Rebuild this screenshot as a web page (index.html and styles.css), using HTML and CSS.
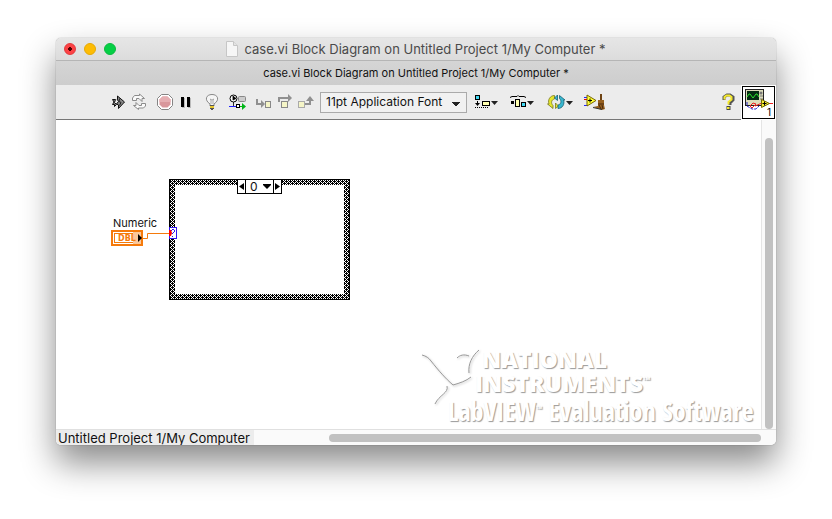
FILE: index.html
```html
<!DOCTYPE html>
<html lang="en">
<head>
<meta charset="utf-8">
<title>case.vi Block Diagram</title>
<link rel="stylesheet" href="styles.css">
</head>
<body>
<main class="window">
  <header class="titlebar">
    <div class="lights">
      <button class="light close" aria-label="Close"></button>
      <button class="light minimize" aria-label="Minimize"></button>
      <button class="light zoom" aria-label="Zoom"></button>
    </div>
    <svg class="doc" viewBox="0 0 12 16" width="12" height="16"><path d="M.5.5h7l4 4v11H.5z" fill="#f6f6f6" stroke="#c6c6c6"/><path d="M7.500.5v4h4" fill="#e4e4e4" stroke="#c6c6c6"/></svg>
    <h1 class="title">case.vi Block Diagram on Untitled Project 1/My Computer *</h1>
  </header>
  <div class="tab">case.vi Block Diagram on Untitled Project 1/My Computer *</div>

  <div class="toolbar">
    <div class="group">
      <button class="tool" aria-label="Run"><svg viewBox="0 0 20 20"><path d="M4.500 7.500h3l-1 3 2 2-2 2v-2h-2l1.500-2.500zM9.500 7V4l7 6-6 6.500V13l-2-1 2-2.500-1.500-2.500z" fill="#888" stroke="#111"/><path d="M11.500 6.500l-.5 3 2 1-1.500 3" fill="none" stroke="#222"/></svg></button>
      <button class="tool" aria-label="Run continuously"><svg viewBox="0 0 20 20"><path d="M3.500 8.500V6l2-2.500h5V2l5 4.500h-2.500v3l-3-3H7.500v2zM16.500 11.500V14l-2 2h-5v1.500l-5-4H7v-3l3 3h2.500v-2z" fill="#fafafa" stroke="#8b8b8b"/></svg></button>
    </div>
    <div class="group">
      <button class="tool" aria-label="Abort"><svg viewBox="0 0 20 20"><path d="M6.500 2.500h7l4 4v7l-4 4h-7l-4-4v-7z" fill="#fff" stroke="#858585"/><path d="M7.500 4.500h5l3 3v5l-3 3h-5l-3-3v-5z" fill="#d9979c"/><path d="M7.500 4.500h5l3 3V10h-11V7.500z" fill="#e5aeb2"/></svg></button>
      <button class="tool" aria-label="Pause"><svg viewBox="0 0 20 20"><path d="M6 6h3v10H6zM12 6h3v10h-3z" fill="#bbb"/><path d="M5 5h3v10H5zM11 5h3v10h-3z"/></svg></button>
    </div>
    <div class="group">
      <button class="tool" aria-label="Highlight execution"><svg viewBox="0 0 20 20"><path d="M8 12C2 8 4 2.500 10 2.500S18 8 12 12v2H8z" fill="#f5f5f5" stroke="#888"/><path d="M8 7l1 1v4M12 7l-1 1v4M8 7l2 1 2-1" fill="none" stroke="#aaa"/><path d="M8 13h4v3H8z" fill="#e6c62e"/><path d="M8 13.500h4M8 16.500h4M9 17.500h2" stroke="#555"/></svg></button>
    </div>
    <div class="group">
      <button class="tool" aria-label="Retain wire values"><svg viewBox="0 0 20 20"><circle cx="5.500" cy="6.500" r="3.500" fill="#fff" stroke="#000"/><path d="M5.500 10v4M5 4l3 2.500L5 8z" stroke="#000" stroke-width=".8"/><rect x="10.500" y="4.500" width="7" height="5" rx="1" fill="#ccc" stroke="#888"/><path d="M1 14.500h8" stroke="#22f"/><path d="M12 14.500h3" stroke="#0b0"/><path d="M14 11l4 3.500-4 3.500z" fill="#00b51a"/><rect x="8.500" y="12.500" width="3" height="3" fill="#fff" stroke="#000"/></svg></button>
    </div>
    <div class="group">
      <button class="tool" aria-label="Step into"><svg viewBox="0 0 20 20"><path d="M3 7v5h5" fill="none" stroke="#909090" stroke-width="2"/><path d="M7 8l4 4-4 4z" fill="#909090"/><rect x="11.500" y="9.500" width="5" height="6" fill="#f5f5c7" stroke="#888"/></svg></button>
      <button class="tool" aria-label="Step over"><svg viewBox="0 0 20 20"><path d="M4 10V6h9" fill="none" stroke="#909090" stroke-width="2"/><path d="M13 2l4 4-4 4z" fill="#909090"/><rect x="6.500" y="9.500" width="6" height="6" fill="#f5f5c7" stroke="#888"/></svg></button>
      <button class="tool" aria-label="Step out"><svg viewBox="0 0 20 20"><rect x="2.500" y="9.500" width="6" height="6" fill="#f5f5c7" stroke="#aaa"/><path d="M9 12h5V8" fill="none" stroke="#909090" stroke-width="2"/><path d="M10 9l4-5 4 5z" fill="#909090"/></svg></button>
    </div>
    <select class="font" aria-label="Font"><option>11pt Application Font</option></select>
    <div class="menus">
      <button class="menu" aria-label="Align objects"><svg viewBox="0 0 28 20"><rect x="1.500" y="3.500" width="4" height="4" fill="#42d9f4" stroke="#000"/><path d="M3.500 9v3" stroke="#000"/><path d="M1 11h5l-2.500 3z"/><path d="M1 15.500h14" stroke="#000" stroke-dasharray="1 1"/><rect x="8.500" y="9.500" width="7" height="4" fill="#ffffb0" stroke="#000"/><path d="M17 9h7l-3.500 4z" fill="#222"/></svg></button>
      <button class="menu" aria-label="Distribute objects"><svg viewBox="0 0 28 20"><path d="M0 5.500l2-1h5l1-1 1 1h5l2 1" fill="none" stroke="#000"/><rect x="1" y="9" width="3" height="3"/><rect x="5.500" y="7.500" width="4" height="7" fill="#ffffb0" stroke="#000"/><rect x="11.500" y="10.500" width="4" height="4" fill="#42d9f4" stroke="#000"/><path d="M17 9h7l-3.500 4z" fill="#222"/></svg></button>
      <button class="menu" aria-label="Reorder"><svg viewBox="0 0 28 20"><path d="M8.500 3.500C4 3.500 1.500 8 3 12H1.500L7 16.500v-3C4.500 11 5.500 7.500 8.500 7z" fill="#e6e62c" stroke="#77771a" stroke-width=".8"/><path d="M9.500 11v5.500l3-2.500z" fill="#e6e62c" stroke="#77771a" stroke-width=".8"/><path d="M12 16.500c4.500 0 7-4.500 5.500-8.500H19l-5.500-4.500v3c2.500 2.500 1.500 6-1.500 6.500z" fill="#38b6cf" stroke="#176273" stroke-width=".8"/><path d="M11.500 3v5.500L8.500 6z" fill="#38b6cf" stroke="#176273" stroke-width=".8"/><path d="M20 9h7l-3.500 4z" fill="#222"/></svg></button>
      <button class="menu" aria-label="Clean up diagram"><svg viewBox="0 0 28 20"><path d="M2 5.500h4M2 13.500h4" stroke="#22f"/><path d="M2 7.500h3" stroke="#e00"/><path d="M5 3l9 5.500L5 14z" fill="#ffff35" stroke="#776500"/><path d="M6 8.500h4M8 6.500v4" stroke="#000"/><path d="M18 2h2v6h2v5l1 4-3 1-9-3 5-1v-6h2z" fill="#96601f"/><path d="M19 2v6M16 12h6M17 13l2 4M20 13l1 4" fill="none" stroke="#47270a"/><path d="M11 15.500l9 2" stroke="#333"/></svg></button>
    </div>
    <div class="right">
      <button class="tool" aria-label="Help"><svg viewBox="0 0 20 20"><path d="M6 8V5l3-2h3l3 2v3l-3 3v2" fill="none" stroke="#555" stroke-width="3"/><path d="M8.500 14h4v4h-4z" fill="#444"/><path d="M6.500 7.500V5l2-1.500h3l2 1.500v2.500L10.500 10v2.500" fill="none" stroke="#f5e92c" stroke-width="2"/><path d="M9 15h2.500v2H9z" fill="#f5e92c"/></svg></button>
      <button class="vi" aria-label="VI icon"><svg viewBox="0 0 30 30"><rect x="2.500" y="2.500" width="18" height="16" fill="#ddddbc" stroke="#222"/><rect x="4" y="4" width="12" height="9" fill="#052c13"/><path d="M4 10l2-3h1l3 4 3-4h1l2 3" fill="none" stroke="#2de32d"/><circle cx="18" cy="6" r="1.500" fill="#777"/><path d="M17 9h3M17 12h3" stroke="#777"/><path d="M4 15v4l5 3h4l3-3" fill="none" stroke="#22c" stroke-dasharray="3 1"/><path d="M7 19l3-3 3 1-4 4zM12 19l7-3M25 16.500h5" fill="none" stroke="#e22"/><path d="M18.500 12.500l8 4-8 4z" fill="#f8ed32" stroke="#776b00"/><path d="M19.500 16.500h4M21.500 14.500v4" stroke="#000"/></svg><span class="vi-number">1</span></button>
    </div>
  </div>

  <section class="workspace">
    <div class="canvas">
      <div class="terminal">
        <span class="terminal-label">Numeric</span>
        <svg class="terminal-icon" viewBox="0 0 32 16" width="32" height="16"><rect x="1" y="1" width="30" height="14" fill="#fff" stroke="#f57a0b" stroke-width="2"/><rect x="3.500" y="3.500" width="24" height="9" fill="#fff" stroke="#f57a0b"/><rect x="22" y="2" width="8" height="12" fill="#fbc89a"/><text class="dbl" x="7" y="11">DBL</text><path d="M27 4l4 4-4 4z"/></svg>
      </div>
      <svg class="wire" viewBox="0 0 28 8" width="28" height="8"><path d="M0 6.500h4.500v-5H28" fill="none" stroke="#f57a0b"/></svg>
      <div class="case">
        <svg class="frame" width="181" height="121">
          <defs><pattern id="weave" width="4" height="4" patternUnits="userSpaceOnUse"><rect width="4" height="4"/><path d="M1 0h1v1H1zM0 1h1v1H0zM2 1h1v1H2zM3 2h1v1H3zM0 3h1v1H0zM2 3h1v1H2z" fill="#fff"/></pattern></defs>
          <path d="M0 0h181v121H0zM6 6v109h169V6z" fill="url(#weave)" fill-rule="evenodd"/>
          <rect x=".5" y=".5" width="180" height="120" fill="none" stroke="#000"/>
        </svg>
        <div class="selector">
          <button class="step" aria-label="Previous case"><svg viewBox="0 0 7 13"><path d="M6 3v7L1 6.500z"/></svg></button>
          <button class="value">0<svg viewBox="0 0 9 13" width="9" height="13"><path d="M0 4h8v1L4 9 0 5z"/></svg></button>
          <button class="step" aria-label="Next case"><svg viewBox="0 0 7 13"><path d="M1 3v7l5-3.500z"/></svg></button>
        </div>
        <svg class="tunnel" viewBox="0 0 8 12" width="8" height="12"><rect x=".5" y=".5" width="7" height="11" fill="#fff" stroke="#3216ef"/><path d="M2 3.500h1M3 2.500h2M5.500 3v2M5 5.500H4M3.500 6v1M3 9.500h1" fill="none" stroke="#3216ef"/><path d="M0 3h2l1 3-1 3H0z" fill="#f00"/></svg>
      </div>
      <div class="watermark">
        <svg class="eagle" viewBox="0 0 60 60" width="60" height="60" fill="none" stroke="#999"><path d="M1 8c4 1 7 3 9 6 8 10 14 17 22 24 7-2 13-4 18-8M26 39c2 7-8 9-12 18M36 11c3-3 7-4 12-2M48 26c-1-9 3-17 10-23"/></svg>
        <div class="brand">NATIONAL</div>
        <div class="brand brand-second">INSTRUMENTS<sup>™</sup></div>
        <div class="product">LabVIEW<sup>™</sup> Evaluation Software</div>
      </div>
    </div>
    <div class="vscroll"><div class="thumb"></div></div>
  </section>
  <footer class="footer">
    <span class="context">Untitled Project 1/My Computer</span>
    <div class="hscroll"><div class="thumb"></div></div>
  </footer>
</main>
</body>
</html>
```
FILE: styles.css
```css
* { box-sizing: border-box; }
body {
  margin: 0;
  min-height: 100vh;
  display: flex;
  padding: 38px 56px 74px;
  background: #fff;
  font-family: Inter, "Liberation Sans", sans-serif;
  color: #111;
}
button { border: 0; padding: 0; margin: 0; background: none; font: inherit; color: inherit; }
svg { display: block; }
.window {
  flex: 1;
  min-width: 0;
  display: flex;
  flex-direction: column;
  border-radius: 5px;
  overflow: hidden;
  background: #fff;
  box-shadow: 0 0 1px rgba(0, 0, 0, .6), 0 18px 34px rgba(0, 0, 0, .46);
}
.titlebar {
  position: relative;
  height: 23px;
  display: flex;
  align-items: center;
  justify-content: center;
  gap: 6px;
  background: linear-gradient(#e6e6e6, #dcdcdc);
  border-bottom: 1px solid #b5b5b5;
}
.lights { position: absolute; left: 8px; top: 5px; display: flex; gap: 8px; }
.light { width: 12px; height: 12px; border-radius: 50%; }
.close { background: radial-gradient(circle, #4d0000 0 2px, #fc4245 2px); border: 1px solid #e2383b; }
.minimize { background: #fdbc04; border: 1px solid #e5a905; }
.zoom { background: #05cf45; border: 1px solid #0bb93f; }
.title { margin: 0; font-size: 13px; font-weight: 400; line-height: 16px; color: #4a4a4a; }
.tab {
  height: 24px;
  line-height: 24px;
  text-align: center;
  font-size: 11px;
  background: linear-gradient(#d5d5d5, #cdcdcd);
}
.toolbar {
  height: 35px;
  display: flex;
  align-items: center;
  padding-left: 52px;
  background: #ececec;
  border-bottom: 1px solid #777;
}
.group { display: flex; gap: 1px; margin-right: 6px; }
.tool, .tool svg { width: 20px; height: 20px; }
.font {
  appearance: none;
  width: 147px;
  height: 21px;
  margin: 0 7px 0 -2px;
  padding: 0 5px;
  border: 1px solid #aaa;
  border-radius: 0;
  font: 12px/18px Inter, sans-serif;
  color: #111;
  background: conic-gradient(from -45deg at 50% 100%, #222 90deg, transparent 0) no-repeat 131px 9px / 8px 4px #f1f1f1;
}
.menus { display: flex; gap: 8px; }
.menu, .menu svg { width: 28px; height: 20px; }
.right { margin-left: auto; display: flex; align-items: center; gap: 4px; }
.vi {
  position: relative;
  width: 33px;
  height: 33px;
  margin-right: 1px;
  border: 1px solid #000;
  outline: 1px solid #fff;
  background: #fff;
}
.vi svg { width: 30px; height: 30px; }
.vi-number { position: absolute; right: 3px; bottom: 0; font-size: 10px; line-height: 11px; color: #000; }
.workspace { flex: 1; display: flex; min-height: 0; }
.canvas { position: relative; flex: 1; background: #fff; }
.terminal { position: absolute; left: 55px; top: 96px; }
.terminal-label { display: block; padding-left: 2px; font-size: 11px; line-height: 14px; }
.dbl { font: bold 8px "DejaVu Sans", sans-serif; fill: #f57a0b; }
.wire { position: absolute; left: 87px; top: 112px; }
.case { position: absolute; left: 113px; top: 59px; width: 181px; height: 121px; }
.selector {
  position: absolute;
  left: 68px;
  top: 0;
  height: 15px;
  display: flex;
  border: 1px solid #000;
  background: #fff;
}
.step svg { width: 7px; height: 13px; }
.value {
  width: 29px;
  display: flex;
  align-items: center;
  justify-content: space-between;
  padding: 0 1px 0 4px;
  border: solid #000;
  border-width: 0 1px;
  font-size: 12px;
  line-height: 13px;
}
.tunnel { position: absolute; left: 0; top: 48px; }
.watermark {
  position: absolute;
  right: 8px;
  bottom: 2px;
  width: 332px;
  padding-left: 54px;
  color: #fff;
  font-family: "Open Sans", sans-serif;
  text-shadow: 1px 1px 1px #999;
  white-space: nowrap;
}
.eagle { position: absolute; left: 0; top: 0; filter: drop-shadow(1px 1px 1px #bbb); }
.brand { padding-left: 7px; font-size: 23px; line-height: 24px; font-weight: 800; }
.brand-second { padding-left: 0; }
.product { margin-left: -27px; font: bold 26px/32px "Liberation Sans Narrow", "Open Sans Condensed", "Roboto Condensed", Roboto, sans-serif; }
.watermark sup { font-size: 9px; line-height: 0; vertical-align: 9px; }
.vscroll { width: 15px; padding: 18px 3px 0; background: #fafafa; border-left: 1px solid #e5e5e5; display: flex; }
.thumb { flex: 1; border-radius: 4px; background: #c1c1c1; }
.footer { height: 16px; display: flex; background: #fafafa; border-top: 1px solid #e0e0e0; }
.context { width: 198px; padding-left: 2px; font-size: 13px; line-height: 16px; background: #ececec; white-space: nowrap; }
.hscroll { flex: 1; display: flex; padding: 4px 15px 3px 75px; }
```
